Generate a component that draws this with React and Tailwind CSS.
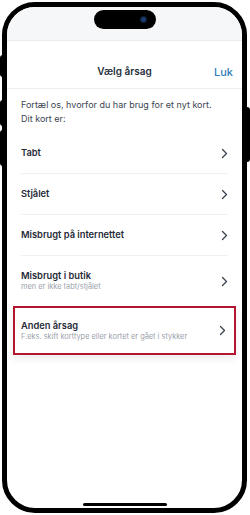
import React from 'react';

const Chevron = () => (
  <svg width="7" height="11" viewBox="0 0 7 11" fill="none" className="shrink-0">
    <path d="M1.5 1.5L5.5 5.5L1.5 9.5" stroke="#39424e" strokeWidth="1.3" strokeLinecap="round" strokeLinejoin="round" />
  </svg>
);

const reasons = [
  { title: 'Tabt' },
  { title: 'Stjålet' },
  { title: 'Misbrugt på internettet' },
  { title: 'Misbrugt i butik', sub: 'men er ikke tabt/stjålet' },
];

const Row = ({ title, sub, last }) => (
  <div className={`flex items-center justify-between mx-[14px] ${sub ? 'h-[50px]' : 'h-[41px]'} ${last ? '' : 'border-b border-[#eef0f2]'}`}>
    <div className="flex flex-col">
      <span className="text-[9.3px] font-semibold text-[#1f2a37] leading-[12px]">{title}</span>
      {sub && <span className="text-[7.4px] text-[#9aa1aa] leading-[10px]">{sub}</span>}
    </div>
    <Chevron />
  </div>
);

export default function App() {
  return (
    <div className="w-[250px] h-[515px] bg-white relative" style={{ fontFamily: 'Inter, "Noto Sans", sans-serif' }}>
      {/* side buttons */}
      <div className="absolute left-0 top-[55px] w-[3px] h-[22px] bg-black rounded-l-sm" />
      <div className="absolute left-0 top-[100px] w-[3px] h-[26px] bg-black rounded-l-sm" />
      <div className="absolute left-0 top-[130px] w-[3px] h-[36px] bg-black rounded-l-sm" />
      <div className="absolute right-0 top-[107px] w-[3px] h-[55px] bg-black rounded-r-sm" />

      <div className="absolute left-[2px] top-[2px] w-[245px] h-[511px] rounded-[33px] border-[5px] border-black bg-white overflow-hidden flex flex-col">
        {/* status bar */}
        <div className="h-[34px] bg-[#f6f7f9] border-b border-[#e9ebee] flex justify-center pt-[3px] shrink-0">
          <div className="w-[62px] h-[19px] bg-black rounded-full flex items-center justify-end pr-[10px]">
            <div className="w-[5px] h-[5px] rounded-full bg-[#1d3a6e] ring-1 ring-[#0d1a30]" />
          </div>
        </div>

        {/* header */}
        <div className="h-[48px] border-b border-[#eceef1] flex items-center pt-[14px] px-[14px] relative shrink-0">
          <span className="flex-1 text-center text-[10px] font-semibold text-[#26303c]">Vælg årsag</span>
          <span className="absolute right-[9px] top-[23px] text-[11px] font-medium text-[#2e7db8]">Luk</span>
        </div>

        {/* intro */}
        <div className="px-[14px] pt-[9px] pb-[8px] text-[9px] leading-[13.5px] text-[#3a4450]">
          <p>Fortæl os, hvorfor du har brug for et nyt kort.</p>
          <p>Dit kort er:</p>
        </div>

        <div className="flex flex-col">
          {reasons.map((r, i) => (
            <Row key={r.title} {...r} last={i === reasons.length - 1} />
          ))}
        </div>

        {/* highlighted option */}
        <div className="mx-[6px] border-2 border-[#b3162e] shadow-[0_4px_8px_rgba(0,0,0,0.07)]">
          <div className="h-[45px] flex items-center justify-between pl-[6px] pr-[8px]">
            <div className="flex flex-col">
              <span className="text-[9.3px] font-semibold text-[#1f2a37] leading-[12px]">Anden årsag</span>
              <span className="text-[7.4px] text-[#9aa1aa] leading-[10px]">F.eks. skift korttype eller kortet er gået i stykker</span>
            </div>
            <Chevron />
          </div>
        </div>

        <div className="flex-1" />
        {/* home indicator */}
        <div className="flex justify-center pb-[2px]">
          <div className="w-[84px] h-[3px] rounded-full bg-black" />
        </div>
      </div>
    </div>
  );
}
